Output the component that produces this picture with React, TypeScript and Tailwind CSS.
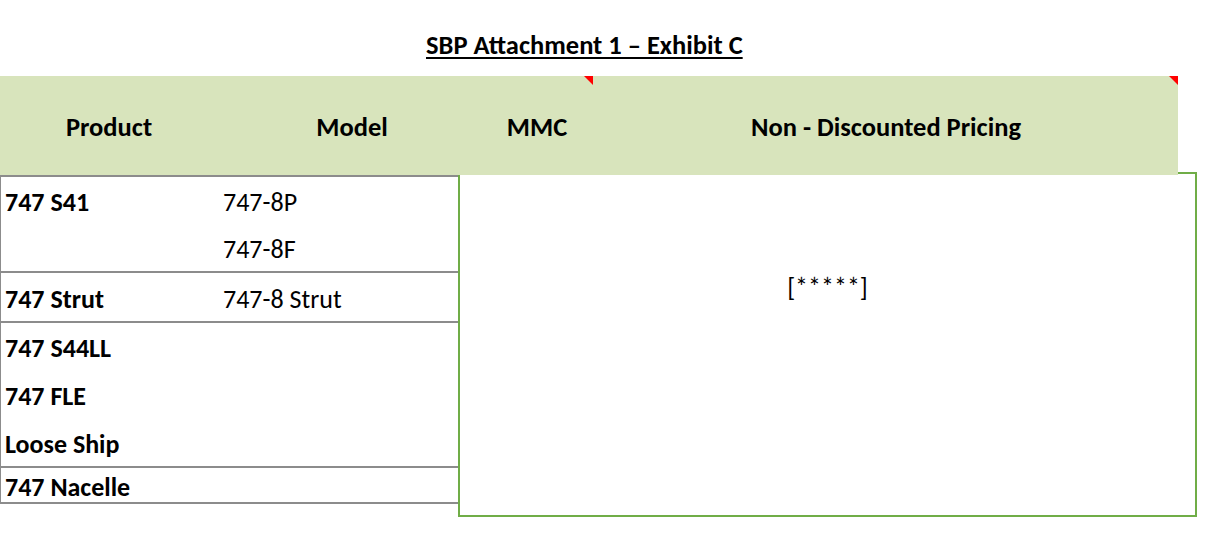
const font = "font-['Carlito','Lato','Open_Sans',sans-serif]"

function CommentMark({ className }: { className: string }) {
  return (
    <svg width="9" height="9" viewBox="0 0 9 9" className={className}>
      <polygon points="0,0 9,0 9,9" fill="#ff0000" />
    </svg>
  )
}

// heights include the 2px bottom rule (border-box)
const rows = [
  { lines: [['747 S41', '747-8P'], ['', '747-8F']], height: 'h-[96px]' },
  { lines: [['747 Strut', '747-8 Strut']], height: 'h-[50px]' },
  { lines: [['747 S44LL', ''], ['747 FLE', ''], ['Loose Ship', '']], height: 'h-[145px]' },
  { lines: [['747 Nacelle', '']], height: 'h-[36px]' },
]

export default function App() {
  return (
    <div className={`${font} w-[1231px] h-[543px] bg-white text-black overflow-hidden`}>
      <div className="h-[76px] pl-[426px] pt-[32px]">
        <span className="text-[26.5px] font-bold underline underline-offset-[3px] decoration-[1.5px] leading-none">
          SBP Attachment 1 – Exhibit C
        </span>
      </div>

      <div className="relative flex h-[99px] w-[1178px] items-center bg-[#d8e4bc] pt-[4px] text-[26.5px] font-bold">
        <div className="w-[218px] text-center">Product</div>
        <div className="w-[268px] text-center">Model</div>
        <div className="w-[102px] text-center">MMC</div>
        <div className="w-[6px]" />
        <div className="w-[584px] text-center">Non - Discounted Pricing</div>
        <CommentMark className="absolute left-[584px] top-0" />
        <CommentMark className="absolute right-0 top-0" />
      </div>

      <div className="flex items-start">
        <div className="w-[458px] border-l border-t-2 border-[#8c8c8c] text-[26px]">
          {rows.map((row, i) => (
            <div key={i} className={`${row.height} flex flex-col justify-around border-b-2 border-[#8c8c8c]`}>
              {row.lines.map(([product, model], j) => (
                <div key={j} className="flex items-center leading-none pt-[3px]">
                  <div className="w-[218px] pl-[4px] font-bold">{product}</div>
                  <div className="pl-[4px]">{model}</div>
                </div>
              ))}
            </div>
          ))}
        </div>
        <div className="-mt-[3px] h-[345px] w-[739px] border-2 border-[#70ad47] pt-[100px] text-center text-[26px] leading-none">
          [*****]
        </div>
      </div>
    </div>
  )
}
